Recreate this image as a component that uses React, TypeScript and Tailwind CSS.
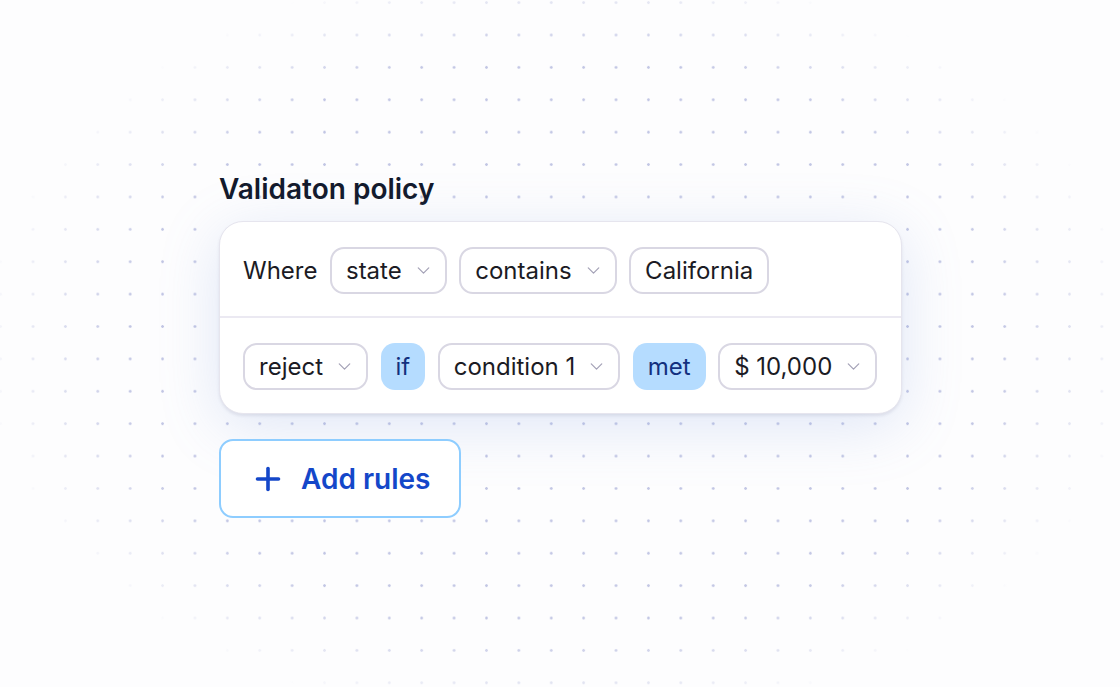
import { ChevronDown, Plus } from "lucide-react";

const font = { fontFamily: "Inter, 'Noto Sans', sans-serif" };

const Select = ({ label }: { label: string }) => (
  <div className="flex h-[47px] items-center gap-[11px] rounded-[14px] border-2 border-[#d9d7e3] bg-white pl-[14px] pr-[11px] text-[24px] text-[#1b1b24]">
    <span>{label}</span>
    <ChevronDown size={21} strokeWidth={1.4} className="text-[#a3a1b6]" />
  </div>
);

const Chip = ({ label }: { label: string }) => (
  <div className="flex h-[47px] items-center rounded-[14px] border-2 border-[#d9d7e3] bg-white px-[14px] text-[24px] text-[#1b1b24]">
    {label}
  </div>
);

const Keyword = ({ label }: { label: string }) => (
  <div className="flex h-[47px] items-center rounded-[14px] bg-[#b5dcff] px-[15px] text-[24px] text-[#13307e]">
    {label}
  </div>
);

export default function App() {
  return (
    <div
      style={font}
      className="relative h-[687px] w-full overflow-hidden bg-[#fdfdfe]"
    >
      {/* dotted canvas */}
      <div className="absolute inset-0 bg-[radial-gradient(circle,#c2c6e4_1.2px,transparent_1.5px)] bg-[length:32.4px_32.4px] bg-[position:16.8px_18.8px] [mask-image:radial-gradient(ellipse_52%_56%_at_50%_50%,black_75%,transparent_100%)]"></div>

      <div className="relative flex flex-col pl-[219px] pt-[170px]">
        <h1 className="text-[28px] font-semibold leading-[38px] text-[#131a2c]">
          Validaton policy
        </h1>

        <div className="mt-[13px] w-[683px] rounded-[24px] border border-[#e6e5ee] bg-white shadow-[0_2px_3px_rgba(60,60,100,0.10),0_12px_60px_rgba(120,150,220,0.22)]">
          <div className="flex items-center gap-[12.5px] px-[23px] pb-[22px] pt-[25px]">
            <span className="text-[24px] text-[#1b1b24]">Where</span>
            <Select label="state" />
            <Select label="contains" />
            <Chip label="California" />
          </div>
          <div className="h-[2px] bg-[#ebe9f2]"></div>
          <div className="flex items-center gap-[12.5px] px-[23px] pb-[23px] pt-[25px]">
            <Select label="reject" />
            <Keyword label="if" />
            <Select label="condition 1" />
            <Keyword label="met" />
            <Select label="$ 10,000" />
          </div>
        </div>

        <button className="mt-[25px] flex h-[79px] w-[242px] items-center gap-[15px] rounded-[14px] border-2 border-[#8ecdff] bg-white pl-[29px] text-[28px] font-semibold text-[#1447c9]">
          <Plus size={36} strokeWidth={2.4} />
          <span>Add rules</span>
        </button>
      </div>
    </div>
  );
}
